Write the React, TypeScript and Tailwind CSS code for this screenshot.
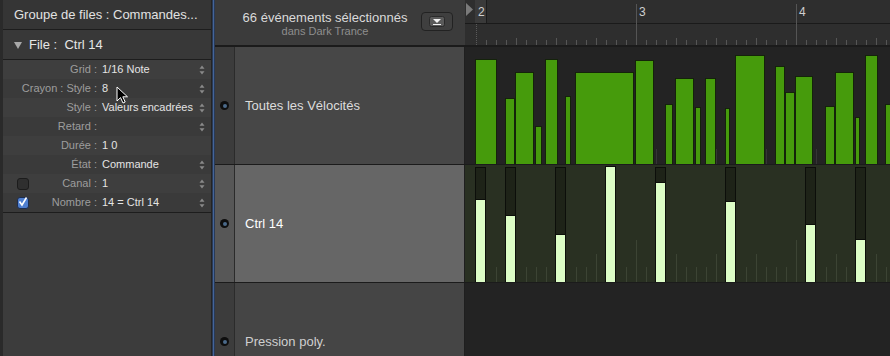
import React from 'react';

type Row = { label: string; value: string; arrows: boolean; check?: boolean };

const rows: Row[] = [
  { label: 'Grid :', value: '1/16 Note', arrows: true },
  { label: 'Crayon : Style :', value: '8', arrows: true },
  { label: 'Style :', value: 'Valeurs encadrées', arrows: true },
  { label: 'Retard :', value: '', arrows: true },
  { label: 'Durée :', value: '1 0', arrows: false },
  { label: 'État :', value: 'Commande', arrows: true },
  { label: 'Canal :', value: '1', arrows: true, check: false },
  { label: 'Nombre :', value: '14 = Ctrl 14', arrows: true, check: true },
];

// velocity bars: [start x, end x, top y] in page coords
const velocity: [number, number, number][] = [
  [475, 497, 59], [505, 515, 98], [515, 534, 72], [535, 542, 126], [545, 558, 59],
  [565, 571, 96], [575, 634, 72], [635, 654, 60], [665, 673, 104], [675, 694, 78],
  [695, 701, 107], [705, 716, 78], [725, 730, 108], [735, 765, 55], [775, 785, 66],
  [785, 795, 92], [795, 813, 76], [825, 835, 106], [835, 854, 72], [855, 860, 117],
  [865, 878, 55], [885, 893, 104],
];

// ctrl 14 events: [x, top of value]
const ctrl: [number, number][] = [
  [475, 199], [505, 215], [555, 234], [605, 166], [655, 182], [725, 201], [805, 224], [855, 239],
];

const ticks = Array.from({ length: 41 }, (_, i) => 486 + i * 10);

const Arrows = () => (
  <svg width="6" height="10" viewBox="0 0 6 10">
    <path d="M3 0.5 L5.5 3.8 L0.5 3.8 Z" fill="#8a8a8a" />
    <path d="M3 9.5 L5.5 6.2 L0.5 6.2 Z" fill="#8a8a8a" />
  </svg>
);

const Checkbox = ({ checked }: { checked: boolean }) =>
  checked ? (
    <div className="w-[12px] h-[12px] rounded-[3px] bg-[#4f7fcf] border border-[#1d2d4f] flex items-center justify-center">
      <svg width="10" height="10" viewBox="0 0 10 10" className="-mt-[2px]">
        <path d="M1.5 4.5 L4 8 L8.5 0.5" fill="none" stroke="#fff" strokeWidth="1.6" />
      </svg>
    </div>
  ) : (
    <div className="w-[12px] h-[12px] rounded-[3px] bg-[#2f2f2f] border border-[#1c1c1c]" />
  );

const LaneDot = () => (
  <div className="w-[9px] h-[9px] rounded-full bg-[#0e0e0e] flex items-center justify-center">
    <div className="w-[4px] h-[4px] rounded-full bg-[#4b6a8a]" />
  </div>
);

const Ruler = () => (
  <svg width="425" height="45" viewBox="0 0 425 45" className="block">
    <rect x="0" y="0" width="425" height="45" fill="#2e2e2e" />
    <rect x="0" y="23" width="425" height="1" fill="#1a1a1a" />
    <rect x="10" y="0" width="11" height="23" fill="#3a3a3a" />
    <rect x="21" y="0" width="1" height="23" fill="#1c1c1c" />
    <path d="M1 3 L8 9.5 L1 16 Z" fill="#7a7a7a" />
    <line x1="11.5" y1="24" x2="11.5" y2="45" stroke="#5a5a5a" strokeDasharray="1 1" />
    <rect x="171" y="4" width="1" height="41" fill="#555" />
    <rect x="331" y="4" width="1" height="41" fill="#555" />
    {ticks.map((x) => {
      if (x === 636 || x === 796) return null;
      const beat = (x - 476) % 40 === 0;
      return <rect key={x} x={x - 465} y={beat ? 38 : 40} width="1" height={beat ? 7 : 5} fill="#555" />;
    })}
    <text x="13" y="16" fontSize="12" fill="#cfcfcf" fontFamily="Liberation Sans, Arial, sans-serif">2</text>
    <text x="174" y="16" fontSize="12" fill="#cfcfcf" fontFamily="Liberation Sans, Arial, sans-serif">3</text>
    <text x="334" y="16" fontSize="12" fill="#cfcfcf" fontFamily="Liberation Sans, Arial, sans-serif">4</text>
  </svg>
);

const VelocityChart = () => (
  <svg width="425" height="117" viewBox="0 0 425 117" className="block">
    <rect width="425" height="117" fill="#232323" />
    {ticks.map((x) => (
      <rect key={x} x={x - 465} y={102} width="1" height="15" fill="#353535" />
    ))}
    {velocity.map(([a, b, t], i) => (
      <rect
        key={i}
        x={a - 465 + 0.5}
        y={t - 47 + 0.5}
        width={b - a - 1}
        height={117 - (t - 47)}
        fill="#469b0c"
        stroke="#14230a"
        strokeWidth="1"
      />
    ))}
  </svg>
);

const CtrlChart = () => (
  <svg width="425" height="117" viewBox="0 0 425 117" className="block">
    <rect width="425" height="117" fill="#293022" />
    {ticks.map((x) => {
      if (ctrl.some(([bx]) => x >= bx && x <= bx + 11)) return null;
      const bar = x === 636 || x === 796;
      const beat = (x - 476) % 40 === 0;
      const top = bar ? 75 : beat ? 89 : 102;
      return <rect key={x} x={x - 465} y={top} width="1" height={117 - top} fill="#3c4434" />;
    })}
    {ctrl.map(([x, t], i) => (
      <g key={i}>
        <rect x={x - 465 + 0.5} y={2.5} width={10} height={115} fill="#1e2318" stroke="#0c0e0a" />
        <rect
          x={x - 465 + 0.5}
          y={t - 165 + 0.5}
          width={10}
          height={117 - (t - 165)}
          fill="#dcfdc6"
          stroke="#0c0e0a"
        />
      </g>
    ))}
  </svg>
);

export default function App() {
  return (
    <div className="w-[890px] h-[356px] flex overflow-hidden bg-[#3c3c3c] font-['Liberation_Sans',Arial,sans-serif]">
      {/* inspector */}
      <div className="relative w-[212px] shrink-0 flex flex-col border-l-[3px] border-l-[#2a2a2a] border-r border-r-[#242424] bg-[#3c3c3c]">
        <div className="h-[30px] shrink-0 flex items-center px-[11px] bg-[#353535] border-b border-[#1d1d1d] text-[13px] text-[#e2e2e2]">
          Groupe de files : Commandes...
        </div>
        <div className="h-[30px] shrink-0 flex items-center px-[11px] bg-[#383838] border-b border-[#1d1d1d] text-[13px] text-[#e6e6e6]">
          <svg width="8" height="8" viewBox="0 0 8 8" className="mr-[7px]">
            <path d="M0 1 L8 1 L4 8 Z" fill="#a8a8a8" />
          </svg>
          <span>File :&nbsp; Ctrl 14</span>
        </div>
        <div className="flex flex-col border-b border-[#1d1d1d]">
          {rows.map((r, i) => (
            <div
              key={r.label}
              className={`h-[19px] flex items-center text-[11px] ${i % 2 === 0 ? 'bg-[#3e3e3e]' : 'bg-[#3a3a3a]'}`}
            >
              <div className="w-[94px] shrink-0 flex items-center">
                {r.check !== undefined && (
                  <div className="pl-[14px] w-[40px] shrink-0">
                    <Checkbox checked={r.check} />
                  </div>
                )}
                <div className="flex-1 text-right whitespace-nowrap text-[#9d9d9d]">{r.label}</div>
              </div>
              <div className="flex-1 pl-[5px] whitespace-nowrap text-[#e4e4e4]">{r.value}</div>
              <div className="w-[6px] mr-[6px] flex items-center">{r.arrows && <Arrows />}</div>
            </div>
          ))}
        </div>
        <svg width="14" height="18" viewBox="0 0 14 18" className="absolute left-[113px] top-[86px]">
          <path d="M1 1 L1 15 L4.5 11.6 L7 17 L9.2 16 L6.8 10.8 L11.5 10.8 Z" fill="#000" stroke="#fff" strokeWidth="1" />
        </svg>
      </div>
      <div className="w-[3px] shrink-0 bg-[#44659a] border-x border-[#2a3a55]" />

      {/* main */}
      <div className="flex-1 flex flex-col min-w-0">
        <div className="h-[47px] shrink-0 flex border-b-2 border-[#1b1b1b]">
          <div className="w-[250px] shrink-0 flex bg-[#3b3b3b]">
            <div className="flex-1 pl-[14px] pt-[10px] flex flex-col items-center">
              <div className="text-[13px] leading-[15px] text-[#dadada] whitespace-nowrap">66 événements sélectionnés</div>
              <div className="text-[11px] leading-[13px] text-[#8e8e8e] whitespace-nowrap">dans Dark Trance</div>
            </div>
            <div className="mt-[12px] mr-[12px] w-[32px] h-[19px] rounded-[4px] bg-[#3f3f3f] border border-[#222] flex items-center justify-center">
              <svg width="16" height="11" viewBox="0 0 16 11">
                <rect x="0.5" y="0.5" width="15" height="10" rx="2" fill="#5a5a5a" stroke="#2a2a2a" />
                <path d="M4 3 L12 3 L8 7 Z" fill="#f2f2f2" />
                <rect x="4" y="8" width="8" height="1" fill="#f2f2f2" />
              </svg>
            </div>
          </div>
          <div className="flex-1 overflow-hidden">
            <Ruler />
          </div>
        </div>

        {[
          { name: 'Toutes les Vélocités', strip: 'bg-[#3c3c3c]', bg: 'bg-[#474747]', text: 'text-[#dcdcdc]', chart: <VelocityChart /> },
          { name: 'Ctrl 14', strip: 'bg-[#575757]', bg: 'bg-[#666666]', text: 'text-[#ffffff]', chart: <CtrlChart /> },
          { name: 'Pression poly.', strip: 'bg-[#3c3c3c]', bg: 'bg-[#454545]', text: 'text-[#cfcfcf]', chart: <div className="w-[425px] h-[117px] bg-[#232323]" /> },
        ].map((l) => (
          <div key={l.name} className="h-[118px] shrink-0 flex border-b border-[#1b1b1b]">
            <div className={`w-[20px] shrink-0 flex items-center justify-center border-r border-[#2b2b2b] ${l.strip}`}>
              <LaneDot />
            </div>
            <div className={`w-[230px] shrink-0 flex items-center pl-[10px] border-r border-[#1f1f1f] text-[13px] ${l.bg} ${l.text}`}>
              {l.name}
            </div>
            <div className="flex-1 overflow-hidden">{l.chart}</div>
          </div>
        ))}
      </div>
    </div>
  );
}
